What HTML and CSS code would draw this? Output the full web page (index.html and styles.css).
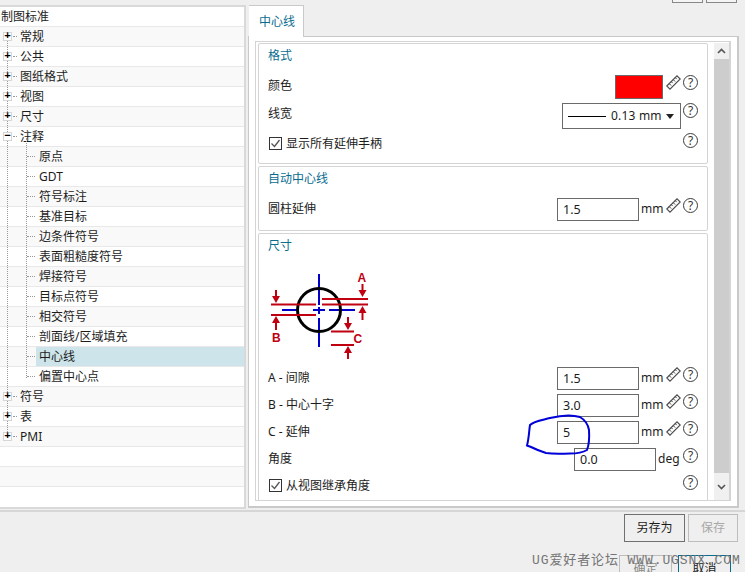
FILE: index.html
```html
<!DOCTYPE html>
<html lang="zh">
<head>
<meta charset="utf-8">
<title>制图标准</title>
<link rel="stylesheet" href="styles.css">
</head>
<body>
<div class="topbar"><span class="topbtn"></span><span class="topbtn"></span></div>
<div class="main">
  <aside class="tree">
    <i class="vline v1"></i><i class="vline v2"></i>
    <div class="node root">制图标准</div>
    <div class="node alt l1"><b class="exp">+</b>常规</div>
    <div class="node l1"><b class="exp">+</b>公共</div>
    <div class="node alt l1"><b class="exp">+</b>图纸格式</div>
    <div class="node l1"><b class="exp">+</b>视图</div>
    <div class="node alt l1"><b class="exp">+</b>尺寸</div>
    <div class="node l1"><b class="exp">−</b>注释</div>
    <div class="node alt l2"><span class="txt">原点</span></div>
    <div class="node l2"><span class="txt">GDT</span></div>
    <div class="node alt l2"><span class="txt">符号标注</span></div>
    <div class="node l2"><span class="txt">基准目标</span></div>
    <div class="node alt l2"><span class="txt">边条件符号</span></div>
    <div class="node l2"><span class="txt">表面粗糙度符号</span></div>
    <div class="node alt l2"><span class="txt">焊接符号</span></div>
    <div class="node l2"><span class="txt">目标点符号</span></div>
    <div class="node alt l2"><span class="txt">相交符号</span></div>
    <div class="node l2"><span class="txt">剖面线/区域填充</span></div>
    <div class="node alt l2 sel"><span class="txt">中心线</span></div>
    <div class="node l2"><span class="txt">偏置中心点</span></div>
    <div class="node alt l1"><b class="exp">+</b>符号</div>
    <div class="node l1"><b class="exp">+</b>表</div>
    <div class="node alt l1"><b class="exp">+</b>PMI</div>
    <div class="node"></div>
    <div class="node alt"></div>
  </aside>
  <section class="pane">
    <div class="tabs"><span class="tab">中心线</span></div>
    <div class="panel">
      <div class="inner">
        <div class="content">
          <div class="group g1">
            <div class="gtitle">格式</div>
            <div class="row r-color">
              <span class="label">颜色</span>
              <span class="swatch"></span>
              <svg class="ruler" viewBox="0 0 15 15"><use href="#ruler-shape"/></svg>
              <span class="help">?</span>
            </div>
            <div class="row r-width">
              <span class="label">线宽</span>
              <span class="select"><i class="sline"></i><span class="sval">0.13 mm</span><i class="caret"></i></span>
              <span class="help">?</span>
            </div>
            <div class="row r-check">
              <span class="check"><svg viewBox="0 0 11 11"><path d="M1.500 5.500 4.500 8.500 9.500 2"/></svg></span>
              <span class="label">显示所有延伸手柄</span>
              <span class="help">?</span>
            </div>
          </div>
          <div class="group g2">
            <div class="gtitle">自动中心线</div>
            <div class="row r-input first">
              <span class="label">圆柱延伸</span>
              <span class="input">1.5</span><span class="unit">mm</span>
              <svg class="ruler" viewBox="0 0 15 15"><use href="#ruler-shape"/></svg>
              <span class="help">?</span>
            </div>
          </div>
          <div class="group g3">
            <div class="gtitle">尺寸</div>
            <svg class="diagram" width="104" height="95" viewBox="268 265 104 95">
              <g fill="none" stroke="#0000c8" stroke-width="2">
                <path d="M319 274V305M319 307V314M319 318V347M282 310H298M313 310H325M329 310H355"/>
              </g>
              <circle cx="319" cy="310" r="21.500" fill="none" stroke="#000" stroke-width="3"/>
              <g fill="none" stroke="#c00010" stroke-width="2">
                <path d="M271 304.500H316M271 315H316M322 299H368M322 304.500H368M331 331.500H354M331 345H354"/>
                <path d="M276 290V297M276 323V330M362.500 284V291M362.500 313V320M348 317V324M348 352V359"/>
              </g>
              <g fill="#c00010">
                <path d="M272 296H280L276 303ZM272 323H280L276 316ZM358.500 290H366.500L362.500 297ZM358.500 313H366.500L362.500 306ZM344 323H352L348 330ZM344 353H352L348 346Z"/>
                <text class="dl" x="357.500" y="282">A</text>
                <text class="dl" x="272" y="342">B</text>
                <text class="dl" x="353.500" y="343">C</text>
              </g>
            </svg>
            <div class="row r-input">
              <span class="label">A - 间隙</span>
              <span class="input">1.5</span><span class="unit">mm</span>
              <svg class="ruler" viewBox="0 0 15 15"><use href="#ruler-shape"/></svg>
              <span class="help">?</span>
            </div>
            <div class="row r-input">
              <span class="label">B - 中心十字</span>
              <span class="input">3.0</span><span class="unit">mm</span>
              <svg class="ruler" viewBox="0 0 15 15"><use href="#ruler-shape"/></svg>
              <span class="help">?</span>
            </div>
            <div class="row r-input">
              <span class="label">C - 延伸</span>
              <span class="input">5</span><span class="unit">mm</span>
              <svg class="ruler" viewBox="0 0 15 15"><use href="#ruler-shape"/></svg>
              <span class="help">?</span>
            </div>
            <div class="row r-input">
              <span class="label">角度</span>
              <span class="input">0.0</span><span class="unit deg">deg</span>
              <span class="help">?</span>
            </div>
            <div class="row r-check last">
              <span class="check"><svg viewBox="0 0 11 11"><path d="M1.500 5.500 4.500 8.500 9.500 2"/></svg></span>
              <span class="label">从视图继承角度</span>
              <span class="help">?</span>
            </div>
          </div>
        </div>
        <div class="scrollbar">
          <span class="sarrow"><svg viewBox="0 0 9 6"><path d="M1 5 4.500 1.500 8 5"/></svg></span>
          <span class="thumb"></span>
          <span class="sarrow"><svg viewBox="0 0 9 6"><path d="M1 1 4.500 4.500 8 1"/></svg></span>
        </div>
      </div>
    </div>
  </section>
</div>
<footer class="footer">
  <div class="actions"><span class="btn primary">另存为</span><span class="btn disabled">保存</span></div>
  <div class="actions lower"><span class="btn ok">确定</span><span class="btn cancel">取消</span></div>
</footer>
<svg class="scribble" width="70" height="46" viewBox="524 412 70 46"><path d="M527 445.500C529 438 529 431 530 425 534 421 543 420 550 418 558 416 570 414 580 417 585 420 588 424 589 430 589.500 438 589 445 587 450 582 453 576 453.500 570 453.500 560 454 552 454 546 453 540 451 535 449 531 447 529 446 528 446 527 445.500Z"/></svg>
<div class="watermark">UG爱好者论坛 WWW.UGSNX.COM</div>
<svg class="defs" width="0" height="0"><defs><g id="ruler-shape"><path d="M0.800 11 11 0.800 14.200 4 4 14.200Z" fill="#fff" stroke="#4a4a4a" stroke-width="1.100"/><path d="M3.200 8.600 5.200 10.600M5.200 6.600 6.700 8.100M7.200 4.600 9.200 6.600M9.200 2.600 10.700 4.100" stroke="#4a4a4a" stroke-width="1" fill="none"/></g></defs></svg>
</body>
</html>
```
FILE: styles.css
```css
* { box-sizing: border-box; }
html, body { margin: 0; height: 572px; overflow: hidden; }
body {
  background: #efefef;
  color: #1c1c1c;
  font: 12px/20px "Noto Sans", "Noto Sans CJK SC", sans-serif;
  position: relative;
}
.topbar { height: 5px; display: flex; justify-content: flex-end; gap: 3px; padding-right: 8px; align-items: flex-start; }
.topbtn { width: 31px; height: 3px; border: 1px solid #888; border-top: 0; background: #f4f4f4; }
.main { height: 505px; display: flex; }

/* tree */
.tree {
  position: relative;
  width: 246px;
  height: 504px;
  background: #fff;
  border: 1px solid #d9d9d9;
  border-width: 2px 2px 2px 0;
  margin-right: 2px;
  flex: none;
}
.node {
  position: relative;
  height: 20px;
  border-bottom: 1px solid #e8e8e8;
  line-height: 19px;
  white-space: nowrap;
}
.alt { background: #f9f9f9; }
.root { padding-left: 1px; }
.l1 { padding-left: 20px; }
.l2 { padding-left: 36px; }
.txt { display: block; padding-left: 3px; height: 19px; }
.sel { background: #f9f9f9; }
.sel .txt { background: #cde4ea; }
.exp {
  position: absolute;
  left: 3px;
  top: 5px;
  width: 9px;
  height: 9px;
  border: 1px solid #d6d6d6;
  background: #fff;
  font: bold 11px/7px "Liberation Mono", monospace;
  color: #000;
  text-align: center;
  z-index: 2;
}
.l1::after, .l2::after {
  content: "";
  position: absolute;
  top: 9px;
  height: 1px;
  border-top: 1px dotted #999;
}
.l1::after { left: 13px; width: 4px; }
.l2::after { left: 27px; width: 8px; }
.vline { position: absolute; width: 1px; border-left: 1px dotted #999; z-index: 1; }
.v1 { left: 7px; top: 31px; height: 400px; }
.v2 { left: 26px; top: 131px; height: 240px; z-index: 3; }

/* pane */
.pane { width: 491px; flex: none; display: flex; flex-direction: column; }
.tabs { height: 31px; display: flex; position: relative; z-index: 1; }
.tab {
  width: 55px;
  height: 32px;
  margin-left: 1px;
  padding: 6px 0 0 10px;
  background: #fff;
  color: #0a6d8f;
  border: 1px solid #c9c9c9;
  border-bottom: 0;
  border-left: 0;
  line-height: 20px;
}
.panel {
  height: 472px;
  padding: 4px 6px 6px 6px;
  background: #fff;
  border: 1px solid #c9c9c9;
  border-width: 1px 2px 2px 1px;
}
.inner {
  height: 460px;
  padding: 1px 1px 0 2px;
  border: 1px solid #d4d4d4;
  border-width: 1px 2px 1px 1px;
  display: flex;
  overflow: hidden;
}
.content { width: 450px; flex: none; margin-right: 6px; }
.scrollbar { width: 15px; background: #f0f0f0; display: flex; flex-direction: column; flex: none; }
.sarrow { height: 16px; display: flex; align-items: center; justify-content: center; flex: none; }
.sarrow:last-child { height: 27px; }
.sarrow svg { width: 9px; height: 6px; fill: none; stroke: #555; stroke-width: 1.600; }
.thumb { flex: 1; background: #cdcdcd; }

/* groups */
.group { border: 1px solid #d4d4d4; border-radius: 2px; padding: 0 9px; }
.g1 { height: 121px; margin-bottom: 2px; }
.g2 { height: 65px; margin-bottom: 2px; }
.g3 { height: 300px; }
.gtitle { height: 24px; line-height: 24px; color: #0a6d8f; }
.row { display: flex; align-items: flex-start; }
.label { line-height: 22px; white-space: nowrap; }
.help {
  width: 15px;
  height: 15px;
  margin-left: 2px;
  border: 1px solid #3c3c3c;
  border-radius: 50%;
  font: 12px/13px "Noto Sans", sans-serif;
  text-align: center;
  color: #333;
  flex: none;
}
.ruler { width: 15px; height: 15px; margin-left: 2px; flex: none; display: block; }
.r-color { height: 24px; margin-top: 7px; margin-bottom: 4px; }
.swatch { width: 48px; height: 24px; margin-left: auto; margin-right: 1px; background: #f00; border: 1px solid #6a6a6a; }
.r-width { height: 25px; margin-bottom: 4px; }
.select {
  width: 119px;
  height: 26px;
  margin-left: auto;
  border: 1px solid #6a6a6a;
  display: flex;
  align-items: center;
  padding-left: 5px;
}
.sline { width: 38px; border-top: 1px solid #000; flex: none; }
.sval { margin-left: 5px; line-height: 24px; white-space: nowrap; width: 52px; letter-spacing: .2px; }
.caret { width: 0; height: 0; border: 4px solid transparent; border-top: 5px solid #222; border-bottom: 0; margin-left: 3px; }
.r-check { height: 23px; padding-top: 1px; }
.r-check .help { margin-left: auto; }
.r-check .label { margin-left: 4px; }
.check {
  width: 13px;
  height: 13px;
  margin: 4px 0 0 1px;
  border: 1px solid #333;
  background: #fff;
  flex: none;
  display: block;
}
.check svg { display: block; width: 11px; height: 11px; fill: none; stroke: #555; stroke-width: 1.300; }
.r-input { height: 22px; margin-bottom: 5px; }
.r-input.first { margin-top: 7px; }
.input {
  width: 82px;
  height: 23px;
  margin-left: auto;
  margin-right: 2px;
  border: 1px solid #6a6a6a;
  padding-left: 5px;
  line-height: 21px;
  background: #fff;
  font-size: 12.500px;
  flex: none;
}
.unit { width: 25px; line-height: 22px; flex: none; }
.unit.deg { width: 24px; margin-right: -1px; }
.r-input .unit + .ruler { margin-left: 0; }
.r-check.last { padding-top: 0; }
.diagram { display: block; margin: 7px 0 7px 0; }
.dl { font: bold 12px "Liberation Sans", sans-serif; }

/* footer */
.footer { height: 62px; border-top: 2px solid #d6d6d6; padding-top: 2px; }
.actions { display: flex; justify-content: flex-end; gap: 3px; padding-right: 7px; }
.btn { height: 28px; text-align: center; line-height: 26px; border: 1px solid #bdbdbd; }
.primary { width: 61px; border-color: #707070; }
.disabled { width: 50px; color: #a8a8a8; }
.lower { gap: 6px; padding-right: 14px; margin-top: 13px; overflow: hidden; height: 17px; }
.ok { width: 53px; color: #8a8a8a; }
.cancel { width: 53px; border-color: #0a6d8f; }

/* overlays */
.scribble { position: absolute; left: 524px; top: 412px; fill: none; stroke: #0000d8; stroke-width: 2; stroke-linecap: round; overflow: visible; }
.watermark {
  position: absolute;
  left: 532px;
  top: 551px;
  font: 13px/20px "Liberation Mono", "Noto Sans CJK SC", monospace;
  letter-spacing: .9px;
  color: #757575;
  white-space: nowrap;
}
.defs { position: absolute; }
```
